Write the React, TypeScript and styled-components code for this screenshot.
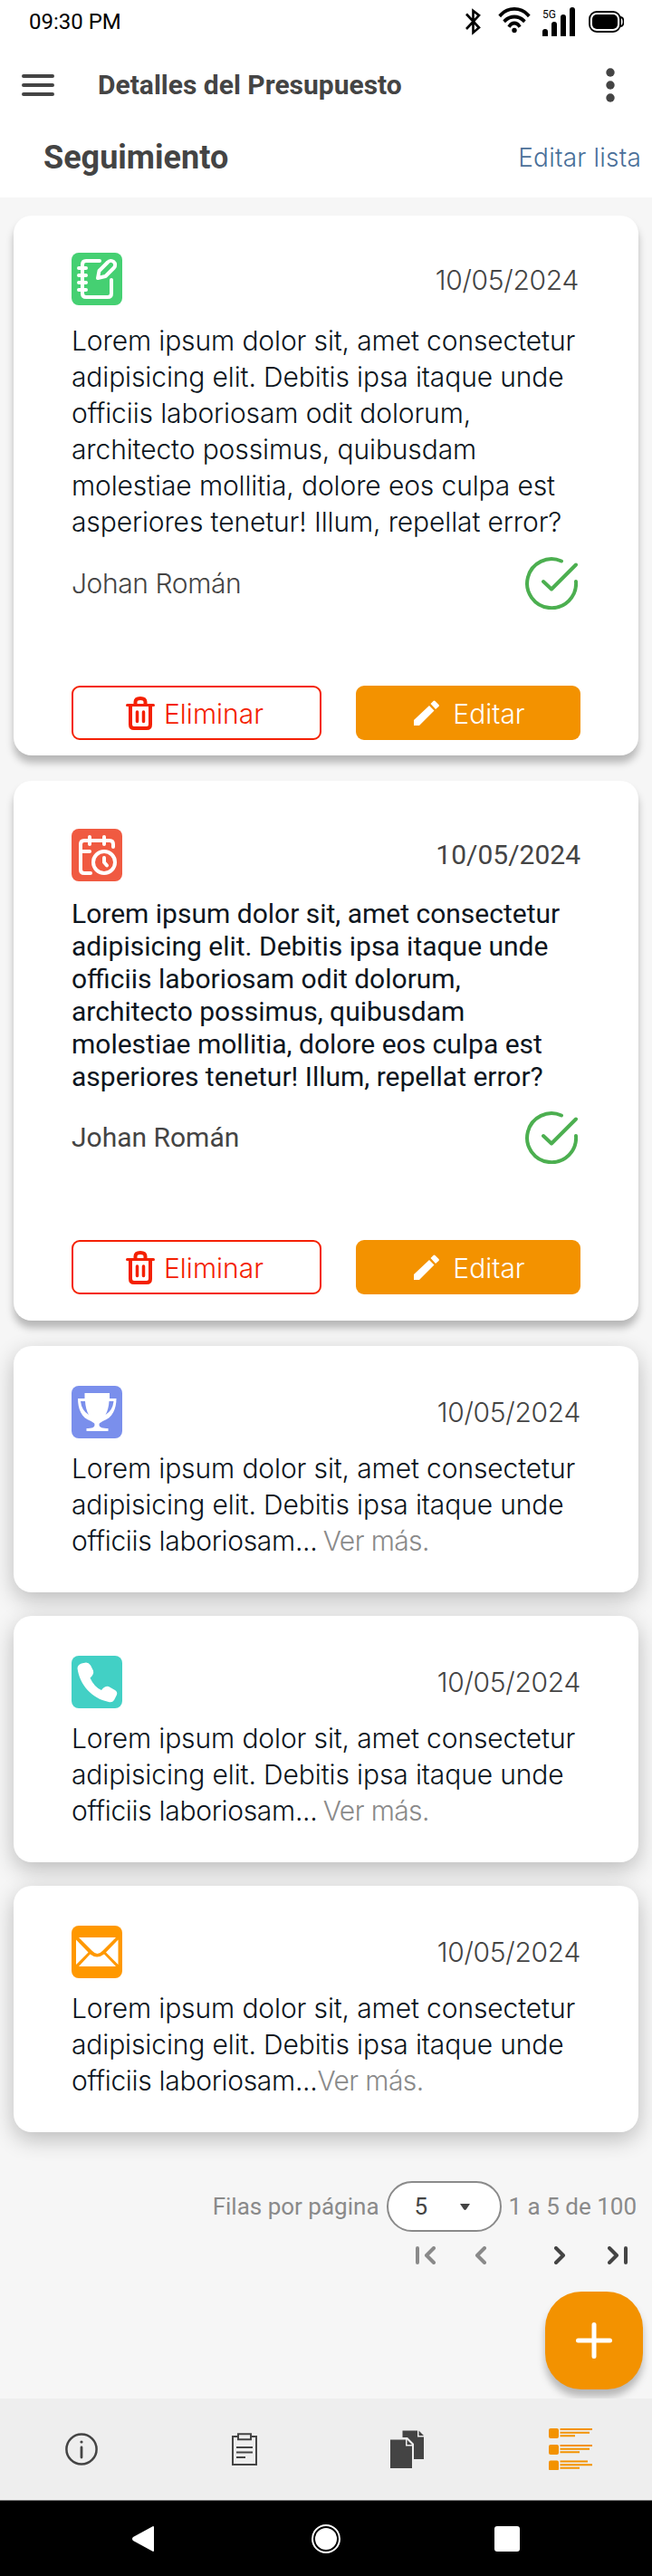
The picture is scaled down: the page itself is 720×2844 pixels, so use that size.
import React from "react";
import styled, { createGlobalStyle } from "styled-components";

const Global = createGlobalStyle`
  * { box-sizing: border-box; }
  body { margin: 0; background: #f6f6f6; }
  button { font: inherit; }
`;

const roboto = `Roboto, sans-serif`;
const inter = `Inter, sans-serif`;

const Screen = styled.div`
  width: 720px;
  height: 2844px;
  display: flex;
  flex-direction: column;
  background: #f6f6f6;
  font-family: ${inter};
  color: #444;
  overflow: hidden;
  svg { display: block; flex: none; }
`;

const Header = styled.header`
  height: 218px;
  background: #fff;
`;

const StatusBar = styled.div`
  height: 48px;
  padding: 0 31px 0 32px;
  display: flex;
  align-items: center;
  justify-content: space-between;
  font: 400 24px/48px ${roboto};
  color: #000;
`;

const AppBar = styled.div`
  height: 92px;
  padding: 0 41px 0 24px;
  display: flex;
  align-items: center;
`;

const AppTitle = styled.h1`
  margin: 0 0 0 48px;
  flex: 1;
  font: 700 30px/40px ${roboto};
`;

const SectionBar = styled.div`
  height: 68px;
  padding: 0 12px 0 48px;
  display: flex;
  align-items: center;
  justify-content: space-between;
`;

const SectionTitle = styled.h2`
  margin: 0;
  font: 700 36px/50px ${roboto};
`;

const EditLink = styled.a`
  font: 300 28px/40px ${inter};
  letter-spacing: 0.2px;
  color: #4a6f99;
`;

const List = styled.main`
  display: flex;
  flex-direction: column;
  padding: 20px 15px 0;
`;

const Card = styled.article<{ $height: number; $top: number; $gap: number; $soft?: boolean }>`
  height: ${(p) => p.$height}px;
  margin-bottom: ${(p) => p.$gap}px;
  padding: ${(p) => p.$top}px 64px 0;
  border-radius: 20px;
  background: #fff;
  box-shadow: ${(p) => (p.$soft ? "0 8px 24px rgba(0,0,0,.24)" : "0 8px 8px rgba(0,0,0,.26)")};
`;

const CardHead = styled.div<{ $inset?: number }>`
  display: flex;
  justify-content: space-between;
  height: 58px;
  padding-right: ${(p) => p.$inset ?? 0}px;
`;

const Badge = styled.div<{ $color: string }>`
  width: 56px;
  height: 58px;
  border-radius: 8px;
  background: ${(p) => p.$color};
`;

const DateText = styled.time<{ $roboto?: boolean; $line?: number }>`
  font: ${(p) => (p.$roboto ? `400 30px/58px ${roboto}` : `300 30px/${p.$line ?? 60}px ${inter}`)};
  letter-spacing: ${(p) => (p.$roboto ? "0" : "-0.3px")};
`;

const Body = styled.p<{ $roboto?: boolean; $top: number }>`
  margin: ${(p) => p.$top}px 0 0;
  font: ${(p) => (p.$roboto ? `400 30px/36px ${roboto}` : `300 30px/40px ${inter}`)};
  letter-spacing: ${(p) => (p.$roboto ? "0" : "-0.12px")};
  color: #0c1520;
  white-space: nowrap;
`;

const LastLine = styled.span`
  letter-spacing: -0.3px;
`;

const More = styled.span<{ $spaced: boolean }>`
  margin-left: ${(p) => (p.$spaced ? -2 : 0)}px;
  letter-spacing: -0.6px;
  color: #8a8a8a;
`;

const AuthorRow = styled.div<{ $top: number }>`
  display: flex;
  justify-content: space-between;
  align-items: center;
  height: 60px;
  margin-top: ${(p) => p.$top}px;
  padding-right: 3px;
`;

const Author = styled.span<{ $roboto?: boolean }>`
  font: ${(p) => (p.$roboto ? `400 30px/40px ${roboto}` : `300 30px/40px ${inter}`)};
  letter-spacing: ${(p) => (p.$roboto ? "0" : "-0.4px")};
`;

const Actions = styled.div`
  display: flex;
  justify-content: space-between;
  margin: 83px 0 0;
`;

const Action = styled.button<{ $primary?: boolean }>`
  width: ${(p) => (p.$primary ? 248 : 276)}px;
  height: 60px;
  padding: ${(p) => (p.$primary ? "1px 0 0 2px" : "1px 4px 0 0")};
  display: flex;
  align-items: center;
  justify-content: center;
  gap: ${(p) => (p.$primary ? 14 : 10)}px;
  border: ${(p) => (p.$primary ? "0" : "2px solid #f42000")};
  border-radius: 9px;
  background: ${(p) => (p.$primary ? "#f39200" : "#fff")};
  color: ${(p) => (p.$primary ? "#fff" : "#f42000")};
  font: 300 30px/40px ${inter};
  letter-spacing: 0;
`;

const Pager = styled.div`
  display: flex;
  align-items: center;
  justify-content: flex-end;
  height: 56px;
  margin-top: 28px;
  padding-right: 2px;
  gap: 8px;
  font: 400 26px/36px ${roboto};
  color: #8a8a8a;
`;

const Select = styled.div`
  display: flex;
  align-items: center;
  justify-content: space-between;
  width: 127px;
  height: 56px;
  padding: 0 33px 0 29px;
  border: 2px solid #8a8a8a;
  border-radius: 28px;
  background: #fff;
  color: #444;
`;

const PagerButtons = styled.div`
  display: flex;
  justify-content: flex-end;
  margin-top: 16px;
  padding-right: 12px;
`;

const PagerIcon = styled.span<{ $gap: number }>`
  margin-left: ${(p) => p.$gap}px;
`;

const FabRow = styled.div`
  flex: 1;
  display: flex;
  justify-content: flex-end;
  padding: 30px 10px 0 0;
`;

const Fab = styled.button`
  width: 108px;
  height: 108px;
  padding: 34px;
  border: 0;
  border-radius: 40px;
  background: #f39200;
  box-shadow: 0 8px 8px rgba(0,0,0,.26);
`;

const TabBar = styled.nav`
  position: relative;
  flex: none;
  height: 113px;
  display: grid;
  grid-template-columns: repeat(4, 1fr);
  place-items: center;
  background: #eee;
  border-bottom: 1px solid #777;
`;

const SystemBar = styled.footer`
  flex: none;
  height: 83px;
  background: #000;
  display: grid;
  grid-template-columns: 24px 1fr 28px;
  align-items: center;
  justify-items: center;
  padding: 0 146px;
`;

const HomeKey = styled.span`
  padding-left: 4px;
`;

const StatusIcons = () => (
  <svg width="176" height="44" viewBox="0 0 176 44">
    <path d="M2 13.500 16 28.500 9.500 34V10L16 15 2 30" fill="none" stroke="#000" strokeWidth="2.600" />
    <path d="M40 14.500a20.500 20.500 0 0 1 30 0M45 20.500a14.500 14.500 0 0 1 20 0M50 26.200a6 6 0 0 1 10 0" fill="none" stroke="#000" strokeWidth="3.800" strokeLinecap="square" />
    <circle cx="55" cy="31.500" r="2.700" />
    <text x="86" y="18" fontFamily="Roboto, sans-serif" fontSize="12">5G</text>
    <path d="M86 38v-5a3 3 0 0 1 6 0v5zM96 38V25a3 3 0 0 1 6 0v13zM106 38V17a3 3 0 0 1 6 0v21zM116 38V9a3 3 0 0 1 6 0v29z" />
    <rect x="138" y="11" width="34" height="22" rx="8" fill="none" stroke="#000" strokeWidth="1.800" />
    <rect x="141" y="14" width="28" height="16" rx="5" />
    <path d="M172 17q3.500 0 3.500 5t-3.500 5" fill="none" stroke="#000" strokeWidth="1.800" />
  </svg>
);

const NoteIcon = () => (
  <svg width="56" height="58" viewBox="0 0 56 58" fill="none" stroke="#fff" strokeWidth="4" strokeLinecap="round" strokeLinejoin="round">
    <path d="M31 9H16q-4 0-4 4v32q0 4 4 4h24q4 0 4-4V30" />
    <path d="M8 17h8M8 25h8M8 33h8M8 41h8" />
    <path d="m29 28 1.500-8L40 10.500a4.600 4.600 0 0 1 7 6L37.500 26z" />
  </svg>
);

const CalendarIcon = () => (
  <svg width="56" height="58" viewBox="0 0 56 58" fill="none" stroke="#fff" strokeWidth="4" strokeLinecap="round" strokeLinejoin="round">
    <path d="M21 49h-7q-4 0-4-4V17q0-4 4-4h28q4 0 4 4v3M20 9v8M36 9v8M10 25h10" />
    <circle cx="36" cy="37" r="12" />
    <path d="M36 32v5l3 3.500" />
  </svg>
);

const TrophyIcon = () => (
  <svg width="56" height="58" viewBox="0 0 56 58">
    <path fill="#fff" d="M14.500 8h27.500v6h7.500c0 11-4 21.500-15 25-3 2-4 2-4 4 0 3 4 4 10 4v3H16.500v-3c6 0 9-1 9-4 0-2-1-2-4-4C10.500 35.500 7 25 7 14h7.500z" />
    <path fill="#7a8fec" d="M10 17h5q.5 9 4 15-8-5-9-15zM46.500 17h-5q-.5 9-4 15 8-5 9-15z" />
  </svg>
);

const PhoneIcon = () => (
  <svg width="56" height="58" viewBox="0 0 56 58">
    <path fill="#fff" d="m11 8.500 5-1q3 0 5 3l3 6q1 4-3.500 8Q25 34.500 33 38q4-5 8-4l7 4q3 2 2 5l-3 6q-2 3-6 2C22 47 9 32 6.500 14q0-4 4.500-5.500z" />
  </svg>
);

const MailIcon = () => (
  <svg width="56" height="58" viewBox="0 0 56 58">
    <path fill="#fff" d="M8 13h41L34 28q-5.500 6-11 0zM5 15.500 18.500 29.500 5 43zM51.500 15.500 38 29.500 51.500 43zM20.500 31.500q7.500 6 15.500 0L49 45H8z" />
  </svg>
);

const CheckIcon = () => (
  <svg width="58" height="58" viewBox="0 0 58 58" fill="none" stroke="#4caf50" strokeWidth="4" strokeLinecap="round" strokeLinejoin="round">
    <path d="M40 4.500A27 27 0 1 0 56 27" />
    <path d="m20 27 9 8.500L56 8.500" />
  </svg>
);

const TrashIcon = () => (
  <svg width="32" height="37" viewBox="0 0 32 37" fill="none" stroke="currentColor" strokeWidth="4">
    <path d="M1.500 9.500h29" strokeWidth="3" strokeLinecap="round" />
    <path d="M5 10v21q0 4 4 4h14q4 0 4-4V10M10.500 9V6q0-4 5.500-4t5.500 4v3" />
    <path d="M12.500 17v10.500M19.500 17v10.500" strokeWidth="3.500" strokeLinecap="round" />
  </svg>
);

const PencilIcon = () => (
  <svg width="30" height="30" viewBox="0 0 30 30" fill="currentColor">
    <path d="M1 28v-6L18 6l5.500 5.500L7 28zM19.500 4 22.500 1q1-1 2 0L28.500 5q1 1 0 2l-3.500 3z" />
  </svg>
);

const lines = ["Lorem ipsum dolor sit, amet consectetur", "adipisicing elit. Debitis ipsa itaque unde"];
const rest = ["officiis laboriosam odit dolorum,", "architecto possimus, quibusdam", "molestiae mollitia, dolore eos culpa est", "asperiores tenetur! Illum, repellat error?"];

const Lines = ({ items }: { items: string[] }) => (
  <>
    {items.map((line) => (
      <React.Fragment key={line}>
        {line}
        <br />
      </React.Fragment>
    ))}
  </>
);

type EntryProps = { icon: React.ReactNode; color: string; roboto?: boolean };

const FullEntry = ({ icon, color, roboto: alt }: EntryProps) => (
  <Card $height={596} $top={alt ? 53 : 41} $gap={28}>
    <CardHead $inset={alt ? 0 : 2}>
      <Badge $color={color}>{icon}</Badge>
      <DateText $roboto={alt}>10/05/2024</DateText>
    </CardHead>
    <Body $roboto={alt} $top={alt ? 18 : 19}>
      <Lines items={[...lines, ...rest]} />
    </Body>
    <AuthorRow $top={alt ? 19 : 18}>
      <Author $roboto={alt}>Johan Román</Author>
      <CheckIcon />
    </AuthorRow>
    <Actions>
      <Action><TrashIcon />Eliminar</Action>
      <Action $primary><PencilIcon />Editar</Action>
    </Actions>
  </Card>
);

const ShortEntry = ({ icon, color, spaced = true }: EntryProps & { spaced?: boolean }) => (
  <Card $height={272} $top={44} $gap={26} $soft>
    <CardHead>
      <Badge $color={color}>{icon}</Badge>
      <DateText $line={58}>10/05/2024</DateText>
    </CardHead>
    <Body $top={13}>
      <Lines items={lines} />
      <LastLine>officiis laboriosam...</LastLine>
      {spaced ? " " : ""}
      <More $spaced={spaced}>Ver más.</More>
    </Body>
  </Card>
);

const chevrons = [
  { gap: 0, w: 22, color: "#8a8a8a", d: "M2 2v16M20 2l-8 8 8 8" },
  { gap: 43, w: 14, color: "#8a8a8a", d: "m11 2-8 8 8 8" },
  { gap: 73, w: 14, color: "#444", d: "m3 2 8 8-8 8" },
  { gap: 46, w: 22, color: "#444", d: "m2 2 8 8-8 8M20 2v16" },
];

export default function App() {
  return (
    <Screen>
      <Global />
      <Header>
        <StatusBar><span>09:30 PM</span><StatusIcons /></StatusBar>
        <AppBar>
          <svg width="36" height="24" viewBox="0 0 36 24" stroke="#444" strokeWidth="4" strokeLinecap="round"><path d="M2 2h32M2 12h32M2 22h32" /></svg>
          <AppTitle>Detalles del Presupuesto</AppTitle>
          <svg width="10" height="38" viewBox="0 0 10 38" fill="#444"><circle cx="5" cy="5" r="4.700" /><circle cx="5" cy="19" r="4.700" /><circle cx="5" cy="33" r="4.700" /></svg>
        </AppBar>
        <SectionBar>
          <SectionTitle>Seguimiento</SectionTitle>
          <EditLink>Editar lista</EditLink>
        </SectionBar>
      </Header>
      <List>
        <FullEntry color="#45d072" icon={<NoteIcon />} />
        <FullEntry color="#f05a41" icon={<CalendarIcon />} roboto />
        <ShortEntry color="#7a8fec" icon={<TrophyIcon />} />
        <ShortEntry color="#42d0c5" icon={<PhoneIcon />} />
        <ShortEntry color="#ff9800" icon={<MailIcon />} spaced={false} />
        <Pager>
          <span>Filas por página</span>
          <Select>
            5
            <svg width="11" height="7" viewBox="0 0 11 7"><path fill="#444" d="M0 0h11L7 6q-1.500 2-3 0z" /></svg>
          </Select>
          <span>1 a 5 de 100</span>
        </Pager>
        <PagerButtons>
          {chevrons.map((c) => (
            <PagerIcon key={c.d} $gap={c.gap}>
              <svg width={c.w} height="20" viewBox={`0 0 ${c.w} 20`} fill="none" stroke={c.color} strokeWidth="4" strokeLinecap="round" strokeLinejoin="round"><path d={c.d} /></svg>
            </PagerIcon>
          ))}
        </PagerButtons>
      </List>
      <FabRow>
        <Fab>
          <svg width="40" height="40" viewBox="0 0 40 40" stroke="#fff" strokeWidth="5" strokeLinecap="round"><path d="M20 2.500v35M2.500 20h35" /></svg>
        </Fab>
      </FabRow>
      <TabBar>
        <svg width="36" height="36" viewBox="0 0 36 36" fill="none" stroke="#444">
          <circle cx="18" cy="18" r="16.600" strokeWidth="2.500" />
          <path d="M18 16v11" strokeWidth="2.800" strokeLinecap="round" />
          <circle cx="18" cy="10" r="1.600" fill="#444" stroke="none" />
        </svg>
        <svg width="28" height="36" viewBox="0 0 28 36" fill="none" stroke="#444" strokeWidth="2">
          <path d="M7 4H1v31h26V4h-6M7 1.200h14v6H7zM5 16h18M5 21.500h18M5 27h10" />
        </svg>
        <svg width="38" height="42" viewBox="0 0 38 42" fill="#444">
          <path d="M0 10.500h17v7h7V42H0zM18.500 10.500l5.500 5.500h-5.500zM13.500 8V.5H30v7h7V32H26V15l-7-7zM31.500.5l5.500 5.500h-5.500z" />
        </svg>
        <svg width="48" height="46" viewBox="0 0 48 46" fill="#f39200">
          <rect y="0" width="11" height="11" rx="2" /><rect y="18" width="11" height="11" rx="2" /><rect y="35.500" width="11" height="11" rx="2" />
          <path d="M12.500 0H48v2H12.500zM12.500 3.700H45v2H12.500zM12.500 7.300H29v2H12.500zM12.500 18H48v2H12.500zM12.500 21.700H45v2H12.500zM12.500 25.300H34v2H12.500zM12.500 35.500H43v2H12.500zM12.500 39.200H48v2H12.500zM12.500 42.800H34v2H12.500z" />
        </svg>
      </TabBar>
      <SystemBar>
        <svg width="24" height="28" viewBox="0 0 24 28"><path d="M24 1v26q0 1-1 1L1 16q-2-2 0-4L23 0q1 0 1 1z" fill="#fff" /></svg>
        <HomeKey>
          <svg width="32" height="32" viewBox="0 0 32 32"><circle cx="16" cy="16" r="15" fill="none" stroke="#fff" strokeWidth="2" /><circle cx="16" cy="16" r="12" fill="#fff" /></svg>
        </HomeKey>
        <svg width="28" height="28" viewBox="0 0 28 28"><rect width="28" height="28" rx="3" fill="#fff" /></svg>
      </SystemBar>
    </Screen>
  );
}
